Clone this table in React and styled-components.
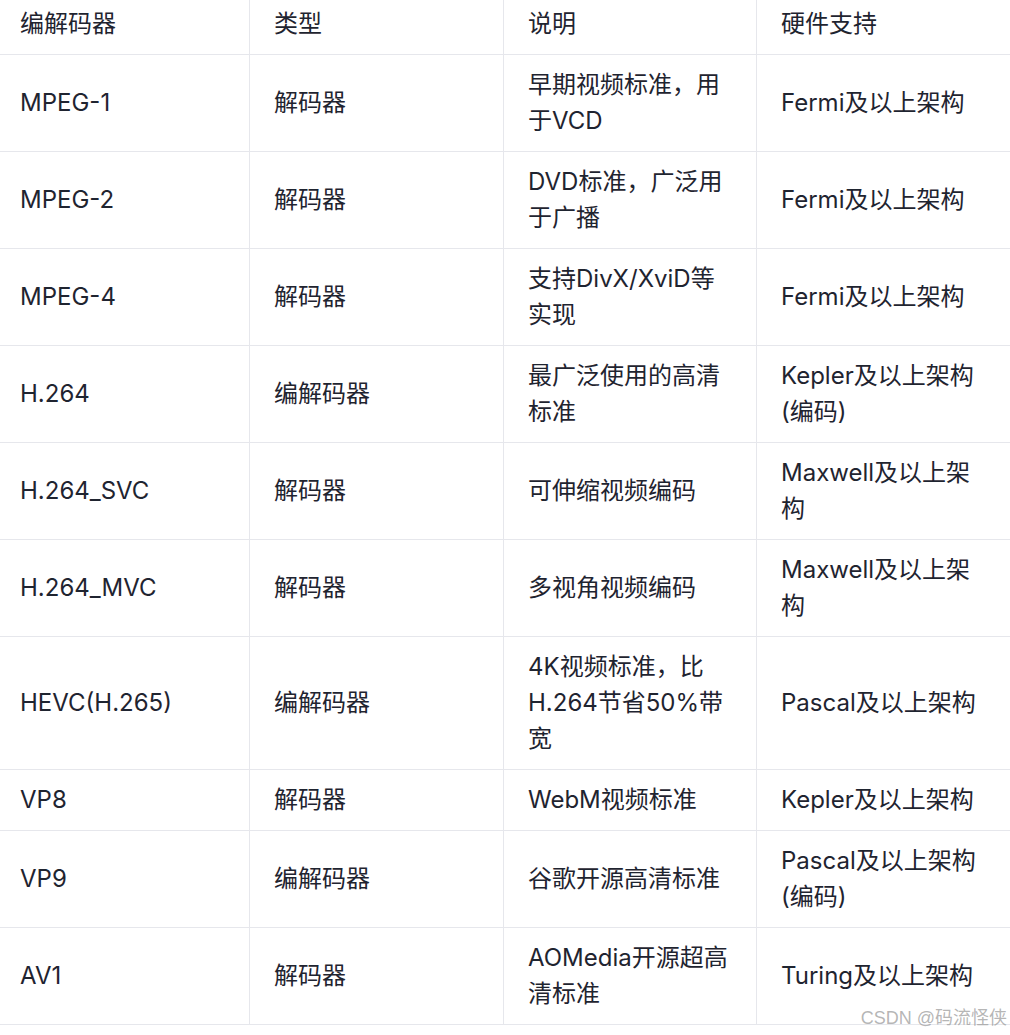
import React from "react"
import styled, { createGlobalStyle } from 'styled-components';

const GlobalStyle = createGlobalStyle`
  html, body {
    margin: 0;
    padding: 0;
    background: #ffffff;
  }
  body {
    font-family: Inter, "Noto Sans CJK SC", sans-serif;
    color: #1f2430;
    overflow: hidden;
  }
`

const Page = styled.div`
  position: relative;
  width: 1010px;
  height: 1035px;
  overflow: hidden;
`

// the header row is cut off at the top of the screenshot
const Table = styled.div`
  display: grid;
  grid-template-columns: 250px 254px 253px 253px;
  margin-top: -6px;
`

const Cell = styled.div`
  display: flex;
  align-items: center;
  box-sizing: border-box;
  padding: 12px 24px;
  padding-left: ${p => (p.$first ? '20px' : '24px')};
  border-bottom: 1px solid #e6e7ec;
  border-right: ${p => (p.$last ? 'none' : '1px solid #e6e7ec')};
  font-family: Inter, "Noto Sans CJK SC", sans-serif;
  font-size: 24px;
  line-height: 36px;
  color: #1f2430;
`

const Watermark = styled.div`
  position: absolute;
  right: 3px;
  bottom: 6px;
  font-family: "Liberation Sans", "Noto Sans CJK SC", sans-serif;
  font-size: 18px;
  line-height: 22px;
  color: rgba(150, 150, 150, 0.7);
`

const head = ['编解码器', '类型', '说明', '硬件支持']

const rows = [
  ['MPEG-1', '解码器', '早期视频标准，用于VCD', 'Fermi及以上架构'],
  ['MPEG-2', '解码器', 'DVD标准，广泛用于广播', 'Fermi及以上架构'],
  ['MPEG-4', '解码器', '支持DivX/XviD等实现', 'Fermi及以上架构'],
  ['H.264', '编解码器', '最广泛使用的高清标准', 'Kepler及以上架构(编码)'],
  ['H.264_SVC', '解码器', '可伸缩视频编码', 'Maxwell及以上架构'],
  ['H.264_MVC', '解码器', '多视角视频编码', 'Maxwell及以上架构'],
  ['HEVC(H.265)', '编解码器', '4K视频标准，比H.264节省50%带宽', 'Pascal及以上架构'],
  ['VP8', '解码器', 'WebM视频标准', 'Kepler及以上架构'],
  ['VP9', '编解码器', '谷歌开源高清标准', 'Pascal及以上架构(编码)'],
  ['AV1', '解码器', 'AOMedia开源超高清标准', 'Turing及以上架构'],
]

function App() {
  return (
    <>
      <GlobalStyle />
      <Page>
        <Table>
          {[head, ...rows].map((row, r) =>
            row.map((text, c) => (
              <Cell key={r + '-' + c} $first={c === 0} $last={c === 3}>
                <span>{text}</span>
              </Cell>
            ))
          )}
        </Table>
        <Watermark>CSDN @码流怪侠</Watermark>
      </Page>
    </>
  );
}

export default App;
